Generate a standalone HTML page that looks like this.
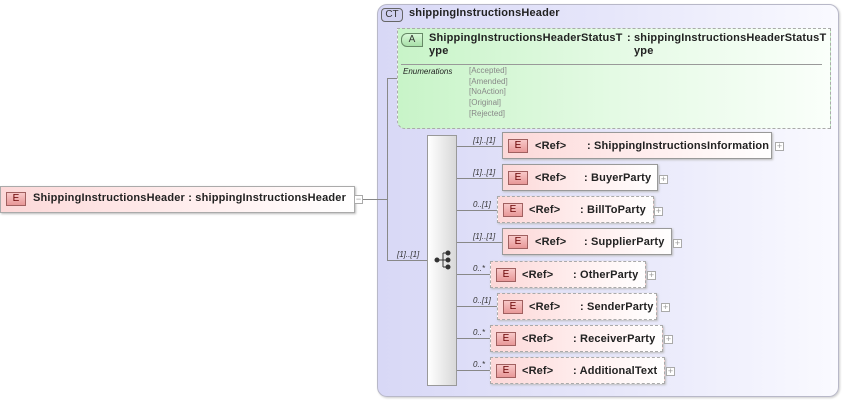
<!DOCTYPE html>
<html><head><meta charset="utf-8"><style>
*{margin:0;padding:0;box-sizing:border-box}
body{width:844px;height:400px;background:#fff;position:relative;overflow:hidden;font-family:"Liberation Sans",Arial,sans-serif;font-size:11px;color:#222}
.a{position:absolute}
.ct{left:377px;top:4px;width:462px;height:393px;border:1px solid #b8b8c8;border-radius:10px;background:linear-gradient(90deg,#d8d8f6 0%,#e6e6fa 50%,#fafaff 100%);box-shadow:1px 1px 2px #ccc}
.badge{position:absolute;width:20px;height:14px;border:1px solid #888;font-size:10px;text-align:center;line-height:12px;color:#333}
.eb{background:linear-gradient(#f8c8c8,#e89898);border-color:#a06060;color:#600}
.box{position:absolute;height:27px;background:linear-gradient(90deg,#fcd8d8,#fff0f0 60%,#fff);border:1px solid #999;box-shadow:1px 1px 2px #bbb}
.box.d{border:1px dashed #aaa}
.box .t{position:absolute;top:7px;font-weight:bold;font-size:11px;white-space:nowrap;letter-spacing:0.15px}
.b{font-weight:bold;letter-spacing:0.18px}
.plus{position:absolute;width:9px;height:9px;border:1px solid #aaa;background:#fff;font-size:9px;line-height:7px;text-align:center;color:#999}
.ln{position:absolute;background:#888}
.lbl{position:absolute;font-size:8px;font-style:italic;color:#333}
</style></head><body>
<div class="a ct"></div>
<div class="badge" style="left:381px;top:8px;width:22px;border-radius:4px;background:#d0d0f0;border-color:#666">CT</div>
<div class="a b" style="left:409px;top:7px;font-size:11px">shippingInstructionsHeader</div>

<div class="a" style="left:397px;top:28px;width:434px;height:101px;border:1px dashed #aaa;border-radius:0 0 0 8px;background:linear-gradient(90deg,#c8f4c8,#e4fae4 50%,#fafffa)"></div>
<div class="badge" style="left:401px;top:33px;width:22px;border-radius:6px 0 0 6px;background:linear-gradient(#d8f8d8,#a8e0a8);border-color:#668866">A</div>
<div class="a b" style="left:429px;top:32px;line-height:13px">ShippingInstructionsHeaderStatusT<br>ype</div>
<div class="a b" style="left:627px;top:32px;line-height:13px">:</div>
<div class="a b" style="left:634px;top:32px;line-height:13px">shippingInstructionsHeaderStatusT<br>ype</div>
<div class="ln" style="left:401px;top:64px;width:421px;height:1px;background:#999"></div>
<div class="a" style="left:403px;top:67px;font-size:8px;font-style:italic">Enumerations</div>
<div class="a" style="left:469px;top:66px;font-size:8px;color:#888;line-height:10.7px">[Accepted]<br>[Amended]<br>[NoAction]<br>[Original]<br>[Rejected]</div>

<div class="box" style="left:0;top:186px;width:355px;height:27px;border-color:#aaa"></div>
<div class="badge eb" style="left:6px;top:192px">E</div>
<div class="a b" style="left:33px;top:192px">ShippingInstructionsHeader : shippingInstructionsHeader</div>
<div class="plus" style="left:354px;top:195px">−</div>
<div class="ln" style="left:363px;top:199px;width:24px;height:1px"></div>
<div class="ln" style="left:387px;top:78px;width:1px;height:182px"></div>
<div class="ln" style="left:387px;top:78px;width:10px;height:1px"></div>
<div class="ln" style="left:387px;top:260px;width:40px;height:1px"></div>
<div class="lbl" style="left:397px;top:250px">[1]..[1]</div>

<div class="a" style="left:427px;top:135px;width:30px;height:251px;border:1px solid #999;background:linear-gradient(90deg,#fff,#d8d8d8)"></div>
<svg class="a" style="left:434px;top:250px" width="18" height="20" viewBox="0 0 18 20"><g fill="#333" stroke="#333"><circle cx="3" cy="10" r="2"/><line x1="3" y1="10" x2="9" y2="10"/><line x1="9" y1="3" x2="9" y2="17"/><line x1="9" y1="3" x2="13" y2="3"/><line x1="9" y1="10" x2="13" y2="10"/><line x1="9" y1="17" x2="13" y2="17"/><circle cx="14" cy="3" r="2"/><circle cx="14" cy="10" r="2"/><circle cx="14" cy="17" r="2"/></g></svg>

<div class="ln" style="left:457px;top:146px;width:45px;height:1px"></div>
<div class="lbl" style="left:473px;top:136px">[1]..[1]</div>
<div class="box" style="left:502px;top:132px;width:270px"><span class="t" style="left:32px">&lt;Ref&gt;</span><span class="t" style="left:84px">: ShippingInstructionsInformation</span></div>
<div class="badge eb" style="left:508px;top:139px">E</div>
<div class="plus" style="left:775px;top:142px">+</div>

<div class="ln" style="left:457px;top:178px;width:45px;height:1px"></div>
<div class="lbl" style="left:473px;top:168px">[1]..[1]</div>
<div class="box" style="left:502px;top:164px;width:156px"><span class="t" style="left:32px">&lt;Ref&gt;</span><span class="t" style="left:81px">: BuyerParty</span></div>
<div class="badge eb" style="left:508px;top:171px">E</div>
<div class="plus" style="left:659px;top:175px">+</div>

<div class="ln" style="left:457px;top:210px;width:41px;height:1px"></div>
<div class="lbl" style="left:473px;top:200px">0..[1]</div>
<div class="box d" style="left:497px;top:196px;width:157px"><span class="t" style="left:31px">&lt;Ref&gt;</span><span class="t" style="left:82px">: BillToParty</span></div>
<div class="badge eb" style="left:503px;top:203px">E</div>
<div class="plus" style="left:654px;top:207px">+</div>

<div class="ln" style="left:457px;top:242px;width:45px;height:1px"></div>
<div class="lbl" style="left:473px;top:232px">[1]..[1]</div>
<div class="box" style="left:502px;top:228px;width:170px"><span class="t" style="left:32px">&lt;Ref&gt;</span><span class="t" style="left:81px">: SupplierParty</span></div>
<div class="badge eb" style="left:508px;top:235px">E</div>
<div class="plus" style="left:673px;top:239px">+</div>

<div class="ln" style="left:457px;top:274px;width:34px;height:1px"></div>
<div class="lbl" style="left:473px;top:264px">0..*</div>
<div class="box d" style="left:490px;top:261px;width:156px"><span class="t" style="left:31px">&lt;Ref&gt;</span><span class="t" style="left:82px">: OtherParty</span></div>
<div class="badge eb" style="left:496px;top:268px">E</div>
<div class="plus" style="left:647px;top:271px">+</div>

<div class="ln" style="left:457px;top:306px;width:41px;height:1px"></div>
<div class="lbl" style="left:473px;top:296px">0..[1]</div>
<div class="box d" style="left:497px;top:293px;width:160px"><span class="t" style="left:31px">&lt;Ref&gt;</span><span class="t" style="left:82px">: SenderParty</span></div>
<div class="badge eb" style="left:503px;top:300px">E</div>
<div class="plus" style="left:661px;top:303px">+</div>

<div class="ln" style="left:457px;top:338px;width:34px;height:1px"></div>
<div class="lbl" style="left:473px;top:328px">0..*</div>
<div class="box d" style="left:490px;top:325px;width:173px"><span class="t" style="left:31px">&lt;Ref&gt;</span><span class="t" style="left:82px">: ReceiverParty</span></div>
<div class="badge eb" style="left:496px;top:332px">E</div>
<div class="plus" style="left:664px;top:335px">+</div>

<div class="ln" style="left:457px;top:370px;width:34px;height:1px"></div>
<div class="lbl" style="left:473px;top:360px">0..*</div>
<div class="box d" style="left:490px;top:357px;width:175px"><span class="t" style="left:31px">&lt;Ref&gt;</span><span class="t" style="left:82px">: AdditionalText</span></div>
<div class="badge eb" style="left:496px;top:364px">E</div>
<div class="plus" style="left:666px;top:367px">+</div>
</body></html>
